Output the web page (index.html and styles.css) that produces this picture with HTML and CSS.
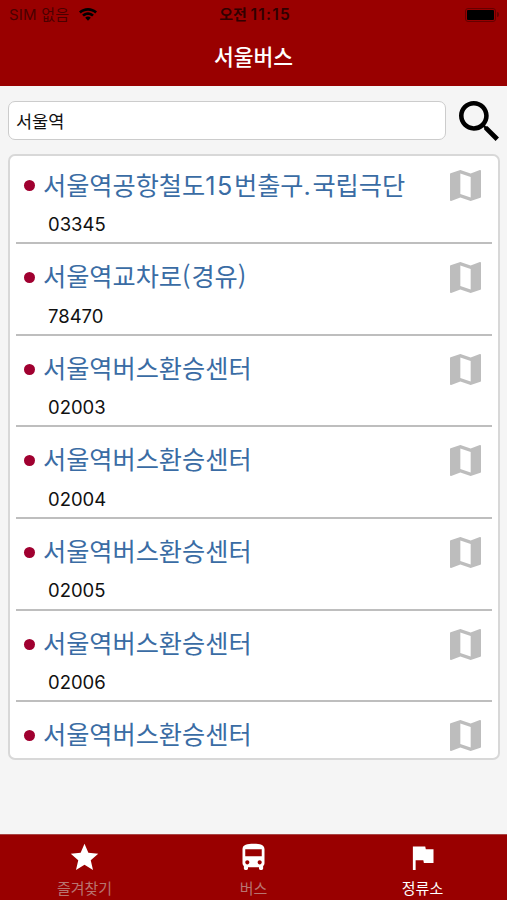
FILE: index.html
```html
<!DOCTYPE html>
<html lang="ko">
<head>
<meta charset="utf-8">
<title>서울버스</title>
<link rel="stylesheet" href="styles.css">
</head>
<body>
<svg class="defs" width="0" height="0">
  <symbol id="map" viewBox="3 3 18 18"><path d="M20.5 3l-.16.03L15 5.1 9 3 3.36 4.9c-.21.07-.36.25-.36.48V20.5c0 .28.22.5.5.5l.16-.03L9 18.9l6 2.1 5.64-1.9c.21-.07.36-.25.36-.48V3.5c0-.28-.22-.5-.5-.5zM15 19l-6-2.11V5l6 2.11V19z"/></symbol>
</svg>
<header class="header">
  <div class="status">
    <div class="carrier"><span>SIM 없음</span>
      <svg class="wifi" viewBox="0 0 18 13"><path d="M9 0C5.6 0 2.4 1.300 0 3.600L1.800 5.500C3.700 3.700 6.200 2.700 9 2.700s5.300 1 7.200 2.800L18 3.600C15.600 1.300 12.400 0 9 0zM9 4.300c-2.200 0-4.300.9-5.900 2.400l1.800 1.900C6 7.600 7.400 7 9 7s3 .6 4.100 1.600l1.800-1.900C13.300 5.200 11.200 4.300 9 4.300zM9 8.500c-1.100 0-2.100.4-2.800 1.200L9 12.800l2.800-3.100C11.100 8.900 10.100 8.500 9 8.500z"/></svg>
    </div>
    <div class="time">오전 <span class="clock">11:15</span></div>
    <div class="power"><div class="battery"></div><div class="nub"></div></div>
  </div>
  <h1 class="title">서울버스</h1>
</header>
<main class="main">
  <div class="search">
    <input class="field" type="text" value="서울역">
    <svg class="lens" viewBox="3 3 17.5 17.5"><path d="M15.500 14h-.79l-.28-.27C15.410 12.590 16 11.110 16 9.500 16 5.910 13.090 3 9.500 3S3 5.910 3 9.500 5.910 16 9.500 16c1.610 0 3.090-.59 4.230-1.570l.27.28v.79l5 4.990L20.490 19l-4.990-5zm-6 0C7.010 14 5 11.990 5 9.500S7.010 5 9.500 5 14 7.010 14 9.500 11.990 14 9.500 14z"/></svg>
  </div>
  <ul class="list">
    <li class="stop"><i class="dot"></i><div class="info"><div class="name">서울역공항철도<span class="num">15</span>번출구<span class="num">.</span>국립극단</div><div class="code">03345</div></div><svg class="map"><use href="#map"/></svg></li>
    <li class="stop"><i class="dot"></i><div class="info"><div class="name">서울역교차로<span class="paren">(</span>경유<span class="paren">)</span></div><div class="code">78470</div></div><svg class="map"><use href="#map"/></svg></li>
    <li class="stop"><i class="dot"></i><div class="info"><div class="name">서울역버스환승센터</div><div class="code">02003</div></div><svg class="map"><use href="#map"/></svg></li>
    <li class="stop"><i class="dot"></i><div class="info"><div class="name">서울역버스환승센터</div><div class="code">02004</div></div><svg class="map"><use href="#map"/></svg></li>
    <li class="stop"><i class="dot"></i><div class="info"><div class="name">서울역버스환승센터</div><div class="code">02005</div></div><svg class="map"><use href="#map"/></svg></li>
    <li class="stop"><i class="dot"></i><div class="info"><div class="name">서울역버스환승센터</div><div class="code">02006</div></div><svg class="map"><use href="#map"/></svg></li>
    <li class="stop last"><i class="dot"></i><div class="info"><div class="name">서울역버스환승센터</div></div><svg class="map"><use href="#map"/></svg></li>
  </ul>
</main>
<nav class="tabs">
  <a class="tab"><svg viewBox="0 0 24 24"><path d="M12 17.270L18.180 21l-1.640-7.030L22 9.240l-7.190-.61L12 2 9.190 8.630 2 9.240l5.460 4.730L5.820 21z"/></svg><span>즐겨찾기</span></a>
  <a class="tab"><svg viewBox="0 0 24 24"><path d="M4 16c0 .88.39 1.670 1 2.220V20c0 .55.45 1 1 1h1c.55 0 1-.45 1-1v-1h8v1c0 .55.45 1 1 1h1c.55 0 1-.45 1-1v-1.780c.61-.55 1-1.340 1-2.220V6c0-3.500-3.580-4-8-4s-8 .5-8 4v10zm3.500 1c-.83 0-1.500-.67-1.500-1.500S6.670 14 7.500 14s1.500.67 1.500 1.500S8.330 17 7.500 17zm9 0c-.83 0-1.500-.67-1.500-1.500s.67-1.500 1.500-1.500 1.500.67 1.500 1.500-.67 1.500-1.500 1.500zm1.500-6H6V6h12v5z"/></svg><span>버스</span></a>
  <a class="tab active"><svg viewBox="0 0 24 24"><path d="M14.400 6L14 4H5v17h2v-7h5.600l.4 2h7V6z"/></svg><span>정류소</span></a>
</nav>
</body>
</html>
```

FILE: styles.css
```css
* { box-sizing: border-box; }

body {
  margin: 0;
  height: 900px;
  display: flex;
  flex-direction: column;
  overflow: hidden;
  background: #f5f5f5;
  font-family: "Noto Sans CJK KR", sans-serif;
}

.defs { position: absolute; }

.header {
  height: 86px;
  background: #990000;
  flex: none;
}

.status {
  height: 29px;
  padding: 0 8px 0 9px;
  display: grid;
  grid-template-columns: 1fr auto 1fr;
  align-items: center;
  font-family: Inter, "Noto Sans CJK KR", sans-serif;
  font-size: 15px;
  line-height: 29px;
  color: #300000;
}

.carrier { display: flex; align-items: center; gap: 10px; color: #4a0000; }
.carrier span { letter-spacing: 0.2px; }
.wifi { width: 18px; height: 13px; fill: #000; }
.time { padding-left: 2px; font-weight: 600; }
.clock { font-size: 15.5px; letter-spacing: 1.2px; }
.power { display: flex; justify-content: flex-end; align-items: center; gap: 1px; }

.battery {
  width: 31px;
  height: 14px;
  padding: 1px;
  border: 1px solid #650000;
  border-radius: 3px;
  background: #000 content-box;
}

.nub { width: 2px; height: 5px; border-radius: 0 2px 2px 0; background: #650000; }

.title {
  margin: 0;
  height: 57px;
  line-height: 53px;
  text-align: center;
  font-size: 21.5px;
  font-weight: 500;
  color: #fff;
}

.main { flex: 1; padding: 15px 7px 0 8px; }

.search { display: flex; justify-content: space-between; height: 39px; }

.field {
  width: 438px;
  height: 39px;
  padding: 0 7px 1px;
  border: 1px solid #ccc;
  border-radius: 7px;
  background: #fff;
  font: 17.5px "Noto Sans CJK KR", sans-serif;
  color: #111;
}

.lens { width: 40px; height: 40px; margin-right: 1px; }

.list {
  margin: 14px 0 0;
  padding: 0 7px;
  height: 606px;
  border: 2px solid #d8d8d8;
  border-radius: 7px;
  background: #fff;
  list-style: none;
  overflow: hidden;
}

.stop {
  display: flex;
  height: 91.670px;
  margin: 0 -1px;
  padding-right: 11px;
  border-bottom: 2px solid #bebebe;
}

.stop:first-child { height: 88px; }
.stop:first-child .dot { margin-top: 24px; }
.stop:first-child .name { margin-top: 9px; }
.stop:first-child .code { margin-top: 3px; }
.stop:first-child .map { margin-top: 14px; }
.last { border: 0; }

.dot {
  flex: none;
  width: 11px;
  height: 11px;
  margin: 28px 8px 0 8px;
  border-radius: 50%;
  background: #a00030;
}

.info { flex: 1; }

.name {
  margin-top: 12px;
  font-size: 25.200px;
  line-height: 38px;
  font-weight: 400;
  color: #3a6ca4;
  white-space: nowrap;
}

.num { font-family: Inter, sans-serif; letter-spacing: 1.6px; }
.paren { letter-spacing: 0.8px; }

.code {
  padding-left: 5px;
  margin-top: 5.5px;
  font-family: Inter, sans-serif;
  font-size: 18.500px;
  line-height: 32px;
  color: #111;
}

.map { flex: none; width: 31px; height: 31px; margin-top: 18px; fill: #bdbdbd; }

.tabs {
  flex: none;
  display: grid;
  grid-template-columns: repeat(3, 1fr);
  height: 66px;
  border-top: 1px solid #a84444;
  background: #990000;
}

.tab {
  display: flex;
  flex-direction: column;
  align-items: center;
  padding: 6px 0 0;
  font-size: 15px;
  line-height: 24px;
  color: #b87470;
}

.tab svg { width: 33px; height: 33px; fill: #fff; flex: none; }
.tab span { margin-top: 2px; }
.active { color: #fff; }
```
